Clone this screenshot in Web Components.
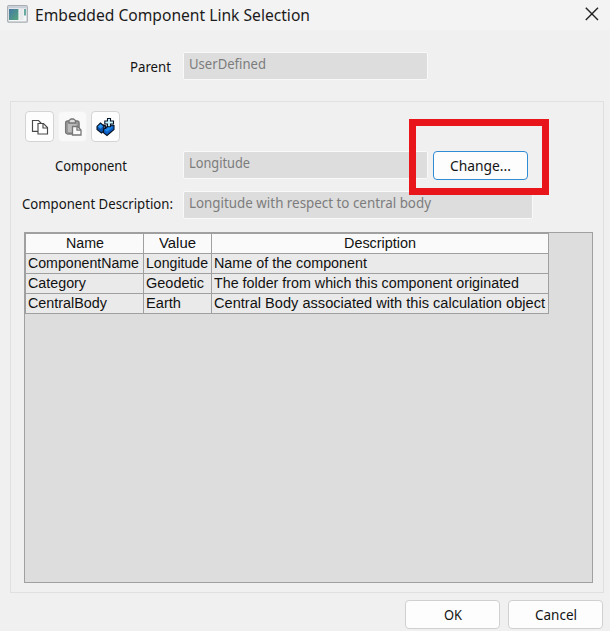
<!DOCTYPE html>
<html lang="en">
<head>
<meta charset="utf-8">
<title>Embedded Component Link Selection</title>
<style>
html,body{margin:0;height:100%;overflow:hidden;background:#f0f0f0}
</style>
</head>
<body>
<link-dialog></link-dialog>
<script>
// Text line whose glyphs are condensed or widened to a given width.
class FitText extends HTMLElement{
  constructor(){super();this.attachShadow({mode:'open'}).innerHTML=`<style>
  :host{display:block;white-space:nowrap;flex:none}
  span{display:inline-block;transform-origin:0 50%}</style><span><slot></slot></span>`;}
  connectedCallback(){
    const w=+this.getAttribute('w'),s=this.shadowRoot.querySelector('span');
    this.style.width=w+'px';
    const n=s.getBoundingClientRect().width;
    if(n)s.style.transform=`scaleX(${w/n})`;
  }
}
class TitleBar extends HTMLElement{
  constructor(){super();this.attachShadow({mode:'open'}).innerHTML=`<style>
  :host{display:flex;height:30px;box-sizing:border-box;background:#f3f3f3;padding:0 11px 0 7px;font:16px/30px "Noto Sans",sans-serif;color:#1b1b1b}
  .app{margin:5px 7px 0 0;flex:none}.x{margin:7px 0 0 auto;flex:none}</style>
  <svg class="app" width="21" height="18" viewBox="0 0 21 18">
   <defs><linearGradient id="g" x1="0" y1="0" x2="1" y2="1"><stop offset="0" stop-color="#4479a4"/><stop offset="1" stop-color="#57a67c"/></linearGradient></defs>
   <rect x=".7" y=".7" width="19.6" height="16.4" rx="1.2" fill="#f5f6f7" stroke="#a8adb4" stroke-width="1.3"/>
   <rect x="1.3" y="1.2" width="18.4" height="2.2" fill="#c7ced6"/>
   <rect x="2" y="4" width="9.4" height="11" fill="url(#g)"/><rect x="12.5" y="4" width="4" height="11" fill="#e7e9eb"/>
   <rect x="17" y="4" width="2" height="6.5" fill="#69a99f"/></svg>
  <slot></slot>
  <svg class="x" width="14" height="14" viewBox="0 0 14 14"><path d="M.8.8l12.2 12.2M13 .8L.8 13" stroke="#222" stroke-width="1.4" fill="none"/></svg>`;}
}
class ReadField extends HTMLElement{
  constructor(){super();this.attachShadow({mode:'open'}).innerHTML=`<style>
  :host{display:block;box-sizing:border-box;width:245px;height:28px;flex:none;background:#ddd;border:1px solid #f9f9f9;border-radius:2px;padding-left:5px;color:#7c7c7c;line-height:22px}
  :host([wide]){width:350px}</style><slot></slot>`;}
}
class PushButton extends HTMLElement{
  constructor(){super();this.attachShadow({mode:'open'}).innerHTML=`<style>
  :host{display:flex;justify-content:center;align-items:center;box-sizing:border-box;width:95px;height:29px;flex:none;background:#fdfdfd;border:1px solid #d0d0d0;border-radius:4px;line-height:26px;padding-top:1px}
  :host([focused]){border-color:#318bd2}
  :host([tool]){width:29px;height:31px;border-color:#d4d4d4;padding:0}
  :host([disabled]){border-color:#f2f2f2;background:#f9f9f9}</style><slot></slot>`;}
}
class PropGrid extends HTMLElement{
  constructor(){super();this.attachShadow({mode:'open'}).innerHTML=`<style>
  :host{display:block;box-sizing:border-box;width:569px;height:351px;background:#ddd;border:1px solid #a0a0a0;font:14px/19px "Liberation Sans",sans-serif;color:#111}
  .t{display:grid;grid-template-columns:118px 68px 337px;grid-auto-rows:20px;width:523px;border-left:1px solid #a0a0a0;border-top:1px solid #a0a0a0}
  .t>div{box-sizing:border-box;border-right:1px solid #a0a0a0;border-bottom:1px solid #a0a0a0;background:#eaeaea;padding-left:2px}
  .t>.h{background:#fafafa;display:flex;justify-content:center;padding:0}</style>
  <div class="t">
  <div class="h"><fit-text w="38">Name</fit-text></div><div class="h"><fit-text w="37">Value</fit-text></div><div class="h"><fit-text w="72">Description</fit-text></div>
  <div><fit-text w="111">ComponentName</fit-text></div><div><fit-text w="62">Longitude</fit-text></div><div><fit-text w="153">Name of the component</fit-text></div>
  <div><fit-text w="58">Category</fit-text></div><div><fit-text w="58">Geodetic</fit-text></div><div><fit-text w="305">The folder from which this component originated</fit-text></div>
  <div><fit-text w="79">CentralBody</fit-text></div><div><fit-text w="35">Earth</fit-text></div><div><fit-text w="331">Central Body associated with this calculation object</fit-text></div>
  </div>`;}
}
class LinkDialog extends HTMLElement{
  constructor(){super();this.attachShadow({mode:'open'}).innerHTML=`<style>
  :host{display:flex;flex-direction:column;width:610px;height:631px;background:#f0f0f0;font:14px/20px "Noto Sans",sans-serif;color:#141414;overflow:hidden}
  .row{display:flex;box-sizing:border-box}
  .parent{height:71px;padding:22px 0 0 130px}.parent read-field{margin-left:12px}
  .lab{padding-top:5px;line-height:20px}
  .group{box-sizing:border-box;width:594px;height:492px;margin-left:10px;border:1px solid #e0e0e0;padding:9px 0 0 13px;position:relative}
  .tools{display:flex;gap:4px;height:40px;padding-left:1px}
  .comp{height:40px;padding-left:31px}.comp read-field{margin-left:56px}.comp push-button{margin-left:5px}
  .desc{height:41px;padding:0}.desc .lab{margin-left:-2px;padding-top:3px}.desc read-field{margin-left:10px}
  .mark{position:absolute;left:398px;top:17px;width:126px;height:62px;border:7px solid #e8161b}
  .foot{display:flex;justify-content:flex-end;gap:8px;padding:7px 7px 0 0}
  svg{display:block}
  </style>
  <title-bar><fit-text w="275">Embedded Component Link Selection</fit-text></title-bar>
  <div class="row parent"><fit-text class="lab" w="41">Parent</fit-text><read-field><fit-text w="77">UserDefined</fit-text></read-field></div>
  <section class="group">
   <div class="tools">
    <push-button tool><svg width="18" height="18" viewBox="0 0 18 18" fill="#fff" stroke="#484848" stroke-width="1.15"><path d="M1.5 2.5h6l2.5 2.5v8.3H1.5z"/><path d="M7 5.5h5.5l4 4V16H7z"/><path d="M12 5.7V10h4.3" fill="none"/></svg></push-button>
    <push-button tool disabled><svg width="18" height="18" viewBox="0 0 18 18" stroke="#777" stroke-width="1.3"><rect x="1.6" y="3" width="13.5" height="13" rx="2" fill="#999"/><rect x="4" y="5.5" width="8.5" height="8.5" fill="#bbb" stroke="none"/><path d="M5 5V2.5l2-1.5h2.5l2 1.5V5z" fill="#ddd"/><path d="M8.5 8.5h5l3.5 3.5v5H8.5z" fill="#fafafa"/><path d="M13 8.7v3.5h3.8" fill="none"/></svg></push-button>
    <push-button tool><svg width="20" height="20" viewBox="0 0 20 20" stroke="#061324" stroke-width="1.1"><path d="M1 9.5L4.5 6l3.5 3-.5 5.500-2 1.500L1 12.500z" fill="#0b4fa8"/><path d="M1.800 9.500l2.700-2.600 2.500 2.300-2.500 2.500z" fill="#2a98f5" stroke="none"/><path d="M7.500 12.500L13.500 8l4.500.5v4L11 18.500l-3.500-2.700z" fill="#0b5fc4"/><path d="M8.500 12.700l5-3.700 3 1.200-5.300 4.500z" fill="#1f8cf0" stroke="none"/><path d="M7 8l2.500 1v3" fill="none" stroke-width="1.800"/><path d="M11.500 1.500h3v2.500H17.500v3h-3v2.700h-3V7H8.800V4h2.700z" fill="#c9f5ff"/></svg></push-button>
   </div>
   <div class="row comp"><fit-text class="lab" w="72">Component</fit-text><read-field><fit-text w="61">Longitude</fit-text></read-field><push-button focused><fit-text w="61">Change...</fit-text></push-button></div>
   <div class="row desc"><fit-text class="lab" w="151">Component Description:</fit-text><read-field wide><fit-text w="242">Longitude with respect to central body</fit-text></read-field></div>
   <prop-grid></prop-grid>
   <div class="mark"></div>
  </section>
  <div class="foot"><push-button><fit-text w="18">OK</fit-text></push-button><push-button><fit-text w="42">Cancel</fit-text></push-button></div>`;}
}
customElements.define('title-bar',TitleBar);
customElements.define('read-field',ReadField);
customElements.define('push-button',PushButton);
customElements.define('prop-grid',PropGrid);
customElements.define('link-dialog',LinkDialog);
customElements.define('fit-text',FitText);
// Grids nested in the dialog hold their own text lines, so fit again once everything is upgraded.
(function fit(root){
  root.querySelectorAll('*').forEach(e=>{
    if(e.localName==='fit-text'){e.shadowRoot.querySelector('span').style.transform='none';e.connectedCallback();}
    if(e.shadowRoot)fit(e.shadowRoot);
  });
})(document);
</script>
</body>
</html>
